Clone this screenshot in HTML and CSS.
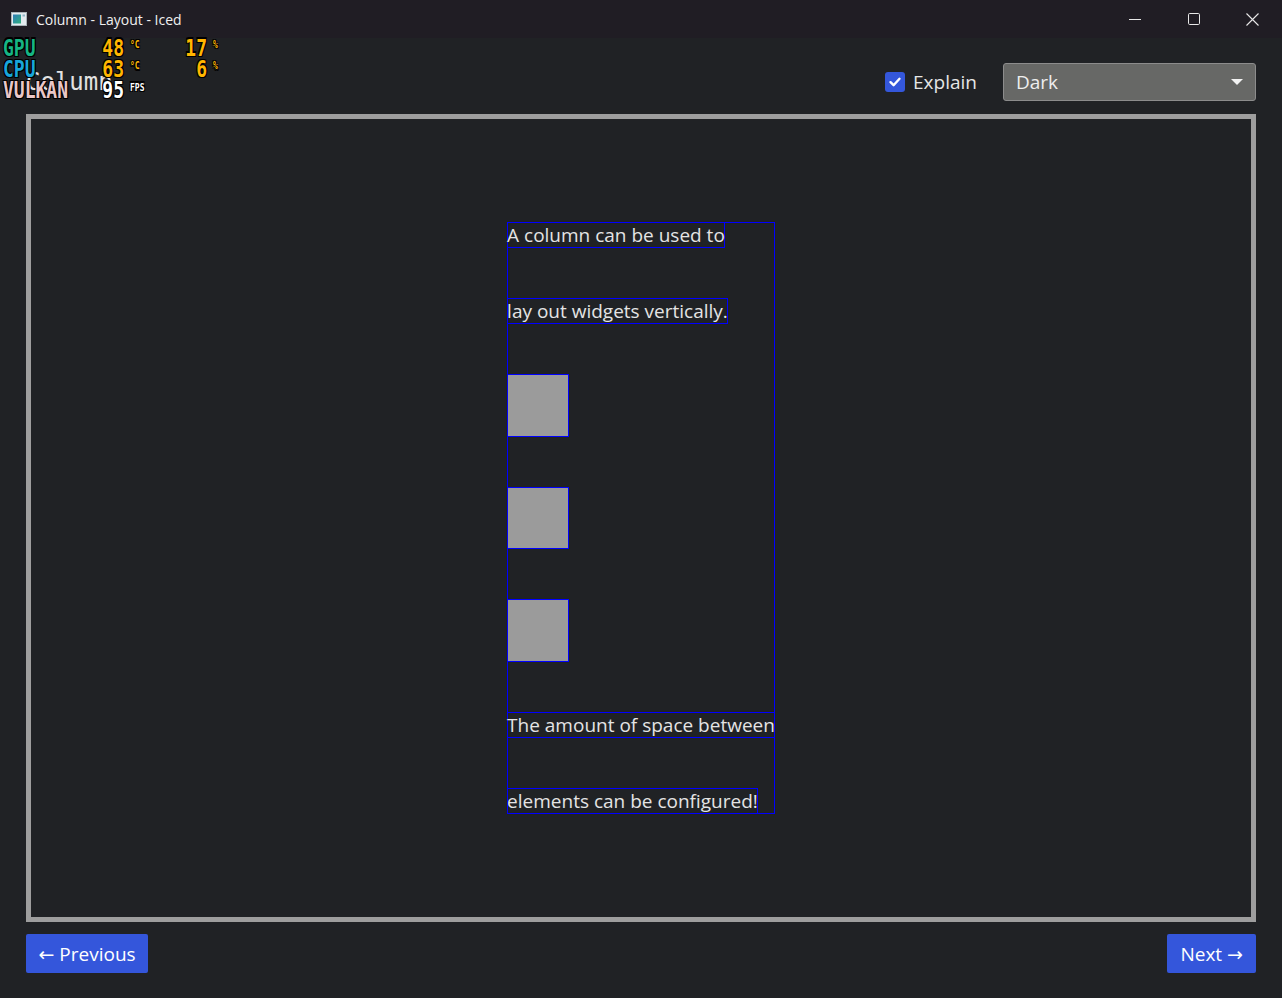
FILE: index.html
```html
<!DOCTYPE html>
<html lang="en">
<head>
<meta charset="utf-8">
<title>Column - Layout - Iced</title>
<link rel="stylesheet" href="styles.css">
</head>
<body>
<div class="window">
  <div class="titlebar">
    <div class="title-left">
      <svg class="app-icon" width="16" height="14" viewBox="0 0 16 14">
        <defs>
          <linearGradient id="ig" x1="0" y1="0" x2="1" y2="1">
            <stop offset="0" stop-color="#2f7db8"/>
            <stop offset="1" stop-color="#2fb07e"/>
          </linearGradient>
        </defs>
        <rect x="0.5" y="0.5" width="15" height="13" fill="#e4ebef" stroke="#a9b3b8"/>
        <rect x="2" y="2.5" width="8" height="9" fill="url(#ig)"/>
        <rect x="11.5" y="2.5" width="2.5" height="2" fill="#8fb6c8"/>
      </svg>
      <span class="title-text">Column - Layout - Iced</span>
    </div>
    <div class="controls">
      <span class="ctl">
        <svg width="12" height="12" viewBox="0 0 12 12"><line x1="0" y1="6.5" x2="12" y2="6.5" stroke="#e8e8e8" stroke-width="1"/></svg>
      </span>
      <span class="ctl">
        <svg width="12" height="12" viewBox="0 0 12 12"><rect x="0.5" y="0.5" width="11" height="11" rx="1.2" fill="none" stroke="#e8e8e8" stroke-width="1"/></svg>
      </span>
      <span class="ctl">
        <svg width="13" height="13" viewBox="0 0 13 13"><path d="M0.5 0.5 L12.5 12.5 M12.5 0.5 L0.5 12.5" stroke="#e8e8e8" stroke-width="1.1"/></svg>
      </span>
    </div>
  </div>

  <div class="content">
    <div class="header">
      <span class="page-title">Column</span>
      <div class="spacer"></div>
      <div class="checkbox">
        <span class="box">
          <svg width="14" height="14" viewBox="0 0 14 14"><path d="M2.5 7.2 L5.6 10.2 L11.5 3.8" fill="none" stroke="#ffffff" stroke-width="2.4" stroke-linecap="round" stroke-linejoin="round"/></svg>
        </span>
        <span class="cb-label">Explain</span>
      </div>
      <div class="picklist">
        <span>Dark</span>
        <svg width="12" height="6" viewBox="0 0 12 6"><polygon points="0,0 12,0 6,6" fill="#f2f2f2"/></svg>
      </div>
    </div>

    <div class="stage">
      <div class="col dbg">
        <div class="t dbg">A column can be used to</div>
        <div class="t dbg">lay out widgets vertically.</div>
        <div class="sq sq-a dbg"></div>
        <div class="sq sq-b dbg"></div>
        <div class="sq sq-a dbg"></div>
        <div class="t dbg">The amount of space between</div>
        <div class="t dbg">elements can be configured!</div>
      </div>
    </div>

    <div class="footer">
      <button class="btn">← Previous</button>
      <button class="btn btn-next">Next →</button>
    </div>
  </div>

  <div class="hud">
    <div class="hud-row"><span class="lbl gpu">GPU</span><span class="val">48</span><span class="unit">°C</span><span class="val2">17</span><span class="unit2">%</span></div>
    <div class="hud-row"><span class="lbl cpu">CPU</span><span class="val">63</span><span class="unit">°C</span><span class="val2">6</span><span class="unit2">%</span></div>
    <div class="hud-row"><span class="lbl vk">VULKAN</span><span class="val white">95</span><span class="unit white">FPS</span></div>
  </div>
</div>
</body>
</html>
```

FILE: styles.css
```css
html, body {
  margin: 0;
  padding: 0;
}

body {
  background: #202225;
  font-family: "Open Sans", "Noto Sans", sans-serif;
  color: #e4e4e4;
  width: 1282px;
  height: 998px;
  overflow: hidden;
}

.window {
  position: relative;
  width: 1282px;
  height: 998px;
  display: flex;
  flex-direction: column;
}

/* Title bar */
.titlebar {
  height: 38px;
  flex: 0 0 38px;
  background: #201d24;
  display: flex;
  align-items: center;
  justify-content: space-between;
}

.title-left {
  display: flex;
  align-items: center;
  gap: 9px;
  padding-left: 11px;
}

.app-icon {
  display: block;
}

.title-text {
  font-family: "Open Sans", "Noto Sans", sans-serif;
  font-size: 14px;
  color: #f0f0f0;
}

.controls {
  display: flex;
  height: 100%;
}

.ctl {
  width: 59px;
  display: flex;
  align-items: center;
  justify-content: center;
}

.ctl svg {
  display: block;
}

/* Content */
.content {
  flex: 1;
  display: flex;
  flex-direction: column;
  padding: 25px 26px;
  min-height: 0;
}

.header {
  height: 38px;
  flex: 0 0 38px;
  display: flex;
  align-items: center;
  margin-bottom: 13px;
}

.page-title {
  font-family: "DejaVu Sans Mono", "Liberation Mono", monospace;
  font-size: 24px;
  color: #e2e2e2;
}

.spacer {
  flex: 1;
}

.checkbox {
  display: flex;
  align-items: center;
  gap: 8px;
  margin-right: 26px;
}

.box {
  width: 20px;
  height: 20px;
  background: #3457db;
  border-radius: 3px;
  display: flex;
  align-items: center;
  justify-content: center;
}

.box svg {
  display: block;
}

.cb-label {
  font-size: 19px;
  color: #e6e6e6;
}

.picklist {
  width: 253px;
  height: 38px;
  box-sizing: border-box;
  background: #676866;
  border: 1px solid #8c8c8c;
  border-radius: 3px;
  display: flex;
  align-items: center;
  justify-content: space-between;
  padding: 0 12px;
  font-size: 19px;
  color: #eeeeee;
}

.picklist svg {
  display: block;
}

/* Stage */
.stage {
  flex: 1;
  min-height: 0;
  border: 5px solid #9e9e9e;
  display: flex;
  align-items: center;
  justify-content: center;
  margin-bottom: 12px;
}

.col {
  display: flex;
  flex-direction: column;
  align-items: flex-start;
  gap: 50px;
}

.dbg {
  box-shadow: inset 0 0 0 1px #0000ff;
}

.t {
  height: 26px;
  line-height: 26px;
  font-size: 19px;
  color: #e4e4e4;
  white-space: nowrap;
}

.sq {
  width: 62px;
  background: #9b9b9b;
}

.sq-a {
  height: 63px;
}

.sq-b {
  height: 62px;
}

/* Footer */
.footer {
  display: flex;
  justify-content: space-between;
  flex: 0 0 39px;
}

.btn {
  height: 39px;
  padding: 0 12.5px;
  background: #3456db;
  color: #ffffff;
  border: none;
  border-radius: 2px;
  font-family: "Open Sans", "Noto Sans", "DejaVu Sans", sans-serif;
  font-size: 19px;
}

.btn-next {
  padding: 0 13px;
}

/* HUD overlay */
.hud {
  position: absolute;
  left: 3px;
  top: 38px;
  transform: scaleY(1.25);
  transform-origin: 0 0;
  font-family: "DejaVu Sans Mono", "Liberation Mono", monospace;
  font-weight: bold;
  font-size: 18px;
  text-shadow: 1px 1px 0 #000, -1px -1px 0 #000, 1px -1px 0 #000, -1px 1px 0 #000;
}

.hud-row {
  display: flex;
  height: 16.8px;
  line-height: 16.8px;
}

.lbl {
  width: 96px;
}

.gpu { color: #16b584; }
.cpu { color: #18a6da; }
.vk { color: #e9c7c7; }

.val {
  width: 25px;
  text-align: right;
  color: #ffb600;
}

.val2 {
  width: 47px;
  text-align: right;
  color: #ffb600;
}

.unit,
.unit2 {
  font-size: 8px;
  line-height: 8px;
  padding-top: 2px;
  padding-left: 6px;
  color: #ffb600;
}

.unit {
  width: 30px;
}

.white {
  color: #ffffff;
}
```
